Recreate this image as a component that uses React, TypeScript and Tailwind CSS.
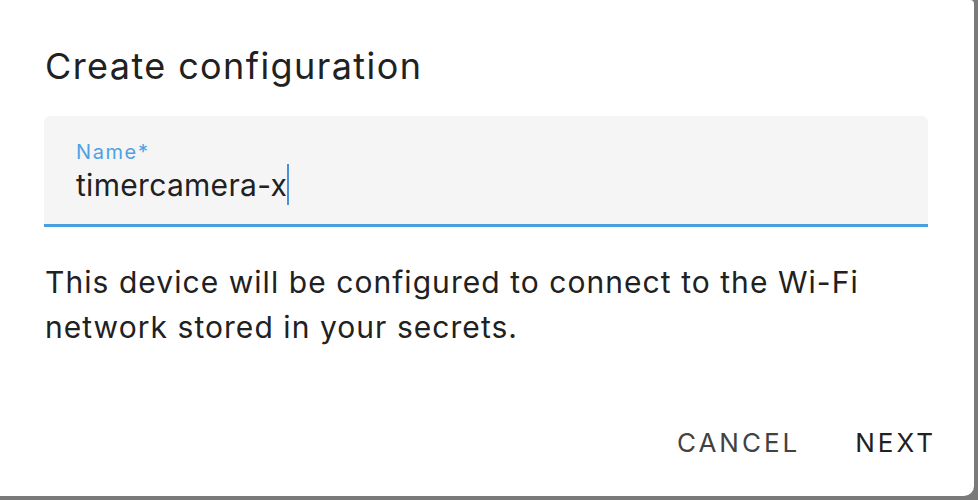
export default function App() {
  return (
    <div
      className="w-[978px] h-[500px] overflow-hidden bg-[#7a7a7a]"
      style={{ fontFamily: "Inter, 'Noto Sans', sans-serif" }}
    >
      {/* Dialog card */}
      <div className="w-[974px] h-[496px] bg-white rounded-br-[10px] rounded-tr-[4px] flex flex-col">
        <h2 className="pl-[45px] pt-[44px] text-[36px] leading-[44px] tracking-[1.4px] font-normal text-[#212121]">
          Create configuration
        </h2>

        {/* Name field */}
        <div className="mt-[28px] ml-[44px] w-[884px] h-[111px] bg-[#f5f5f5] rounded-t-[6px] border-b-[3px] border-[#4a9fe0] pl-[32px] pt-[24px]">
          <div className="text-[20px] leading-[24px] tracking-[1.6px] text-[#4ea2e3]">Name*</div>
          <div className="flex items-center text-[30px] leading-[40px] tracking-[0.3px] text-[#212121]">
            <span>timercamera-x</span>
            <span className="w-[2px] h-[41px] bg-[#4a90d9]" />
          </div>
        </div>

        <p className="pl-[45px] pt-[33px] pr-[100px] text-[30px] leading-[45px] tracking-[1.05px] text-[#212121]">
          This device will be configured to connect to the Wi-Fi network stored in your secrets.
        </p>

        {/* Actions */}
        <div className="mt-auto mb-[35px] pr-[38px] flex justify-end gap-[55px] text-[26px] leading-[36px] tracking-[3px]">
          <button className="text-[#424242]">CANCEL</button>
          <button className="text-[#212121]">NEXT</button>
        </div>
      </div>
    </div>
  );
}
